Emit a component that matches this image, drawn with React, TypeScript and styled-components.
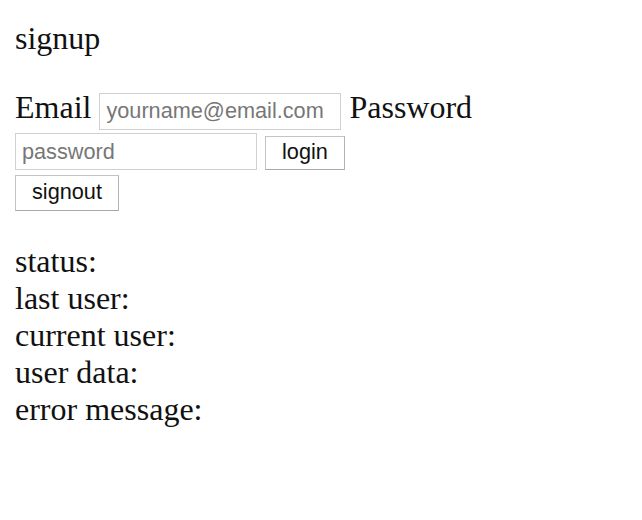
import React from "react";
import styled, { createGlobalStyle } from "styled-components";

const GlobalStyle = createGlobalStyle`
  html, body {
    margin: 0;
    padding: 0;
    background: #ffffff;
  }
`;

const Page = styled.div`
  padding: 20px 15px 0;
  font-family: "Liberation Serif", "Times New Roman", serif;
  font-size: 32px;
  line-height: normal;
  color: #111;
`;

const Title = styled.div`
  margin-bottom: 32px;
`;

const Form = styled.div``;

const Label = styled.span``;

const TextInput = styled.input`
  box-sizing: border-box;
  width: 242px;
  height: 37px;
  padding: 5px 6px;
  margin: 0;
  border: 1px solid #d0d0d0;
  border-radius: 0;
  background: #fff;
  font-family: "Liberation Sans", Arial, sans-serif;
  font-size: 21.7px;
  line-height: normal;
  color: #222;
  vertical-align: baseline;
  outline: none;
  &::placeholder {
    color: #777;
  }
`;

const Button = styled.button<{ $tall?: boolean }>`
  box-sizing: content-box;
  margin: 0;
  padding: ${(p) => (p.$tall ? "3px 16px 5px" : "2px 16px 4px")};
  border: 1px solid #c4c4c4;
  border-bottom-color: #a9a9a9;
  border-right-color: #b4b4b4;
  border-radius: 0;
  background: #fff;
  font-family: "Liberation Sans", Arial, sans-serif;
  font-size: 21.7px;
  line-height: normal;
  color: #111;
  vertical-align: baseline;
`;

const StatusList = styled.div`
  margin-top: 32px;
`;

const StatusLine = styled.div``;

export default function App() {
  const statuses = ["status:", "last user:", "current user:", "user data:", "error message:"];
  return (
    <>
      <GlobalStyle />
      <Page>
        <Title>signup</Title>
        <Form>
          <Label>Email</Label> <TextInput type="text" placeholder="yourname@email.com" />{" "}
          <Label>Password</Label> <TextInput type="password" placeholder="password" />{" "}
          <Button>login</Button>
          <br />
          <Button $tall>signout</Button>
        </Form>
        <StatusList>
          {statuses.map((s) => (
            <StatusLine key={s}>{s}</StatusLine>
          ))}
        </StatusList>
      </Page>
    </>
  );
}
